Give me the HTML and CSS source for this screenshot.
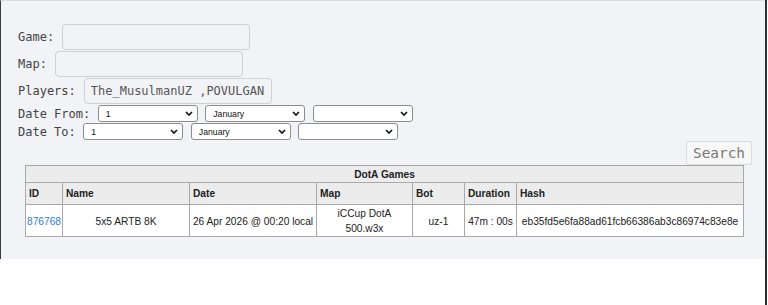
FILE: index.html
```html
<!DOCTYPE html>
<html>
<head>
<meta charset="utf-8">
<link rel="stylesheet" href="styles.css">
</head>
<body>
<div class="frame">
  <div class="panel">
    <form class="filters">
      <div class="row"><label>Game:</label><input class="field" type="text"></div>
      <div class="row"><label>Map:</label><input class="field" type="text"></div>
      <div class="row"><label>Players:</label><input class="field" type="text" value="The_MusulmanUZ ,POVULGAN"></div>
      <div class="row date">
        <label>Date From:</label>
        <div class="sel"><select><option>1</option></select><svg viewBox="0 0 8 5"><path d="M1 1 L4 4 L7 1"/></svg></div>
        <div class="sel"><select><option>January</option></select><svg viewBox="0 0 8 5"><path d="M1 1 L4 4 L7 1"/></svg></div>
        <div class="sel"><select><option></option></select><svg viewBox="0 0 8 5"><path d="M1 1 L4 4 L7 1"/></svg></div>
      </div>
      <div class="row date">
        <label>Date To:</label>
        <div class="sel"><select><option>1</option></select><svg viewBox="0 0 8 5"><path d="M1 1 L4 4 L7 1"/></svg></div>
        <div class="sel"><select><option>January</option></select><svg viewBox="0 0 8 5"><path d="M1 1 L4 4 L7 1"/></svg></div>
        <div class="sel"><select><option></option></select><svg viewBox="0 0 8 5"><path d="M1 1 L4 4 L7 1"/></svg></div>
      </div>
      <div class="actions"><button type="button" class="search">Search</button></div>
    </form>
    <table class="games">
      <colgroup>
        <col class="c-id"><col class="c-name"><col class="c-date"><col class="c-map"><col class="c-bot"><col class="c-dur"><col class="c-hash">
      </colgroup>
      <thead>
        <tr><th colspan="7" class="title">DotA Games</th></tr>
        <tr class="heads"><th>ID</th><th>Name</th><th>Date</th><th>Map</th><th>Bot</th><th>Duration</th><th>Hash</th></tr>
      </thead>
      <tbody>
        <tr>
          <td><a href="#">876768</a></td>
          <td>5x5 ARTB 8K</td>
          <td>26 Apr 2026 @ 00:20 local</td>
          <td>iCCup DotA<br>500.w3x</td>
          <td>uz-1</td>
          <td>47m : 00s</td>
          <td>eb35fd5e6fa88ad61fcb66386ab3c86974c83e8e</td>
        </tr>
      </tbody>
    </table>
  </div>
</div>
</body>
</html>
```
FILE: styles.css
```css
html, body {
  margin: 0;
  padding: 0;
  background: #ffffff;
}
.frame {
  width: 767px;
  height: 305px;
  box-sizing: border-box;
  border-right: 2px solid #2e2e2e;
}
.panel {
  height: 259px;
  box-sizing: border-box;
  background: #f2f3f7;
  border-top: 1px solid #dadbe0;
  border-left: 1px solid #3a3a3a;
  padding: 23px 0 0 17px;
}
.filters {
  display: flex;
  flex-direction: column;
  gap: 1px;
}
.row {
  display: flex;
  align-items: center;
  gap: 8px;
  height: 26px;
  font-family: "DejaVu Sans Mono", monospace;
  font-size: 12px;
  color: #444;
}
.row.date {
  height: 17px;
  gap: 7.5px;
}
.row label {
  white-space: pre;
}
.field {
  width: 188px;
  height: 26px;
  box-sizing: border-box;
  border: 1px solid #cfd0d4;
  border-radius: 4px;
  background: #f2f3f7;
  padding: 0 6px;
  font-family: "DejaVu Sans Mono", monospace;
  font-size: 12px;
  color: #555;
  outline: none;
}
.sel {
  position: relative;
  width: 100px;
  height: 17px;
}
.sel select {
  appearance: none;
  -webkit-appearance: none;
  width: 100%;
  height: 100%;
  box-sizing: border-box;
  border: 1px solid #8d8d8d;
  border-radius: 3px;
  background: #ffffff;
  padding: 0 0 0 7px;
  margin: 0;
  font-family: "Liberation Sans", Arial, sans-serif;
  font-size: 8.7px;
  color: #111;
}
.sel svg {
  position: absolute;
  right: 5px;
  top: 6px;
  width: 8px;
  height: 5px;
  pointer-events: none;
}
.sel svg path {
  fill: none;
  stroke: #151515;
  stroke-width: 1.7;
}
.actions {
  display: flex;
  justify-content: flex-end;
  padding-right: 13px;
}
.search {
  width: 66px;
  height: 24px;
  box-sizing: border-box;
  border: 1px solid #dcdcdc;
  border-radius: 2px;
  background: #f7f7f8;
  font-family: "DejaVu Sans Mono", monospace;
  font-size: 14.4px;
  color: #777;
  padding: 0;
  margin: 0;
}
.games {
  margin-left: 7px;
  width: 718px;
  table-layout: fixed;
  border-collapse: collapse;
  font-family: "Liberation Sans", Arial, sans-serif;
  font-size: 10.2px;
  line-height: 15px;
  color: #222;
}
.c-id { width: 37px; }
.c-name { width: 127px; }
.c-date { width: 127px; }
.c-map { width: 96px; }
.c-bot { width: 52px; }
.c-dur { width: 52px; }
.c-hash { width: 227px; }
.games th, .games td {
  border: 1px solid #a9a9a9;
  white-space: nowrap;
  overflow: hidden;
}
.games th {
  background: #ececec;
  font-weight: bold;
  text-align: left;
  padding: 3px 3px;
}
.games th.title {
  text-align: center;
  padding: 1px 3px 0;
}
.games td {
  background: #ffffff;
  text-align: center;
  padding: 1px 0 0;
}
.games a {
  color: #2a7de1;
  text-decoration: none;
}
```
